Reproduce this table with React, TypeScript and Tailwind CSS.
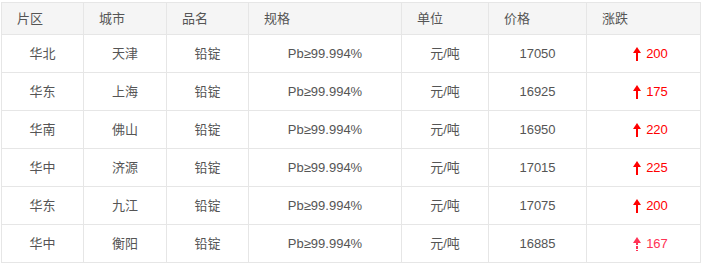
import React from 'react';

type Row = {
  area: string;
  city: string;
  name: string;
  spec: string;
  unit: string;
  price: number;
  change: number;
  faded?: boolean;
};

const headers = ['片区', '城市', '品名', '规格', '单位', '价格', '涨跌'];

const rows: Row[] = [
  { area: '华北', city: '天津', name: '铅锭', spec: 'Pb≥99.994%', unit: '元/吨', price: 17050, change: 200 },
  { area: '华东', city: '上海', name: '铅锭', spec: 'Pb≥99.994%', unit: '元/吨', price: 16925, change: 175 },
  { area: '华南', city: '佛山', name: '铅锭', spec: 'Pb≥99.994%', unit: '元/吨', price: 16950, change: 220 },
  { area: '华中', city: '济源', name: '铅锭', spec: 'Pb≥99.994%', unit: '元/吨', price: 17015, change: 225 },
  { area: '华东', city: '九江', name: '铅锭', spec: 'Pb≥99.994%', unit: '元/吨', price: 17075, change: 200 },
  { area: '华中', city: '衡阳', name: '铅锭', spec: 'Pb≥99.994%', unit: '元/吨', price: 16885, change: 167, faded: true },
];

const UpArrow = ({ faded }: { faded?: boolean }) => (
  <svg width="8" height="14" viewBox="0 0 8 14" className="shrink-0">
    <polygon points="4,0 8,6 0,6" fill={faded ? '#ff3355' : '#ff0000'} />
    <line
      x1="4"
      y1="5"
      x2="4"
      y2="14"
      stroke={faded ? '#ff3355' : '#ff0000'}
      strokeWidth="2"
      strokeDasharray={faded ? '3 1' : undefined}
    />
  </svg>
);

const cell = 'flex items-center justify-center border-r border-b border-[#e6e6e6] h-[38px]';

export default function App() {
  return (
    <div className="bg-white w-[704px] h-[266px] pt-[2px] pl-[1px]" style={{ fontFamily: '"Liberation Sans", "Noto Sans CJK SC", sans-serif' }}>
      <div className="grid grid-cols-[82px_83px_82px_153px_87px_98px_114px] w-fit border-l border-t border-[#e6e6e6] text-[13px] text-[#555]">
        {headers.map((h) => (
          <div key={h} className="flex items-center h-[32px] pl-[15px] bg-[#f5f5f5] border-r border-b border-[#e6e6e6]">
            {h}
          </div>
        ))}
        {rows.map((r, i) => (
          <React.Fragment key={i}>
            <div className={cell}>{r.area}</div>
            <div className={cell}>{r.city}</div>
            <div className={cell}>{r.name}</div>
            <div className={cell}>{r.spec}</div>
            <div className={cell}>{r.unit}</div>
            <div className={cell}>{r.price}</div>
            <div className={`${cell} gap-[5px] pl-[14px] ${r.faded ? 'text-[#ff3355]' : 'text-[#ff0000]'}`}>
              <UpArrow faded={r.faded} />
              <span>{r.change}</span>
            </div>
          </React.Fragment>
        ))}
      </div>
    </div>
  );
}
